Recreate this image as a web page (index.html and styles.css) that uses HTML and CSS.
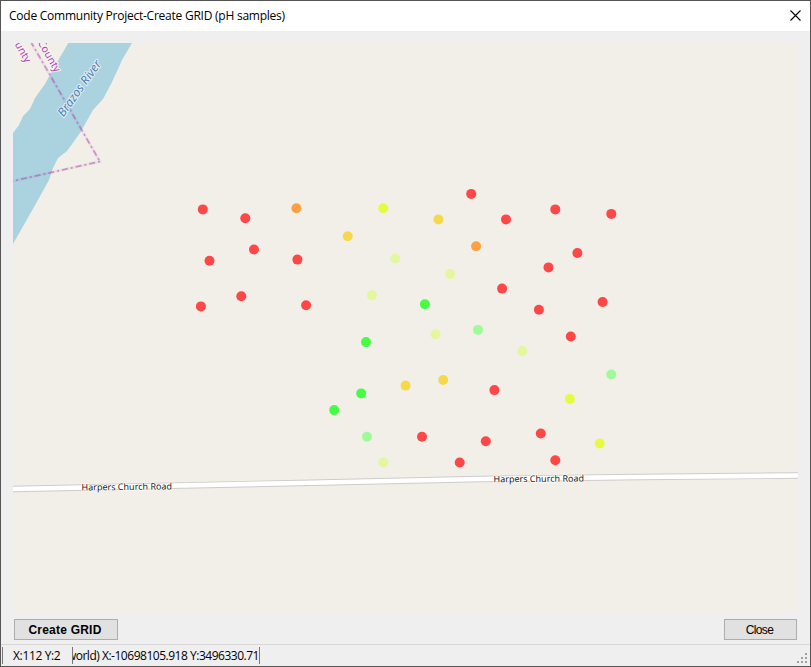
FILE: index.html
```
<!DOCTYPE html>
<html lang="en">
<head>
<meta charset="utf-8">
<title>Code Community Project</title>
<link rel="stylesheet" href="styles.css">
</head>
<body>
<div class="window">
  <header class="titlebar">
    <span class="title">Code Community Project-Create GRID (pH samples)</span>
    <svg class="close-icon" width="11" height="11" viewBox="0 0 11 11"><path d="M.5 .5l10 10M10.500 .5l-10 10"/></svg>
  </header>
  <main class="content">
    <svg class="map" width="785" height="569" viewBox="13 43 785 569">
      <path class="river" d="M68.300 43L55.500 65L45 84L35 98L30 109L23 116L19 125L13 133V244L34 207L49 180L53 168L58 158L67 151L80 133L93 110L103 99L111 84L119 67L122 60L132 43Z"/>
      <path class="border-band" d="M31.500 43L100 161.500L13 181"/>
      <path class="border-line" d="M99 160L31.500 43"/>
      <path class="border-line" d="M100 161.500L13 181"/>
      <path class="road-edge" d="M13 489L300 483L480 479L640 477L798 475.500"/>
      <path class="road" d="M13 489L300 483L480 479L640 477L798 475.500"/>
      <g class="road-label">
        <text x="81.500" y="490.500" textLength="90.500" lengthAdjust="spacingAndGlyphs" transform="rotate(-.7 82 490)">Harpers Church Road</text>
        <text x="493.500" y="482.300" textLength="90.500" lengthAdjust="spacingAndGlyphs" transform="rotate(-.5 494 482)">Harpers Church Road</text>
      </g>
      <text class="river-label" transform="translate(63.500 117.500) rotate(-54.500)" textLength="66" lengthAdjust="spacingAndGlyphs">Brazos River</text>
      <g class="county-label">
        <text transform="translate(55 73) rotate(60)" text-anchor="end">County</text>
        <text transform="translate(25.500 63.500) rotate(60)" text-anchor="end">County</text>
      </g>
      <g class="red">
        <circle cx="202.800" cy="209.400" r="5"/><circle cx="245.300" cy="218.300" r="5"/><circle cx="254" cy="249.500" r="5"/>
        <circle cx="209.500" cy="260.700" r="5"/><circle cx="297.400" cy="259.600" r="5"/><circle cx="241.300" cy="296.300" r="5"/>
        <circle cx="200.900" cy="306.400" r="5"/><circle cx="306.100" cy="305.300" r="5"/><circle cx="471.200" cy="193.900" r="5"/>
        <circle cx="506" cy="219.400" r="5"/><circle cx="555.300" cy="209.400" r="5"/><circle cx="611.300" cy="213.900" r="5"/>
        <circle cx="577.400" cy="253" r="5"/><circle cx="548.500" cy="267.400" r="5"/><circle cx="502.100" cy="288.600" r="5"/>
        <circle cx="538.900" cy="309.800" r="5"/><circle cx="602.600" cy="302" r="5"/><circle cx="570.800" cy="336.500" r="5"/>
        <circle cx="494.400" cy="390.100" r="5"/><circle cx="422" cy="436.800" r="5"/><circle cx="485.800" cy="441.200" r="5"/>
        <circle cx="540.800" cy="433.500" r="5"/><circle cx="459.700" cy="462.500" r="5"/><circle cx="555.300" cy="460.300" r="5"/>
      </g>
      <g class="orange"><circle cx="296.400" cy="208.300" r="5"/><circle cx="476.100" cy="246.200" r="5"/></g>
      <g class="gold">
        <circle cx="347.700" cy="236.200" r="5"/><circle cx="438.400" cy="219.500" r="5"/><circle cx="405.600" cy="385.600" r="5"/><circle cx="443.200" cy="380" r="5"/>
      </g>
      <g class="yellow"><circle cx="383.300" cy="208.300" r="5"/><circle cx="569.800" cy="398.900" r="5"/><circle cx="599.700" cy="443.500" r="5"/></g>
      <g class="pale">
        <circle cx="395.200" cy="258.500" r="5"/><circle cx="371.900" cy="295.200" r="5"/><circle cx="450.100" cy="274.100" r="5"/>
        <circle cx="435.500" cy="334.300" r="5"/><circle cx="522.400" cy="351.100" r="5"/><circle cx="383.400" cy="462.400" r="5"/>
      </g>
      <g class="mint"><circle cx="478" cy="329.900" r="5"/><circle cx="611.300" cy="374.500" r="5"/><circle cx="367" cy="436.800" r="5"/></g>
      <g class="green">
        <circle cx="424.900" cy="304.200" r="5"/><circle cx="366" cy="342.100" r="5"/><circle cx="361.200" cy="393.400" r="5"/><circle cx="334.200" cy="410.100" r="5"/>
      </g>
    </svg>
    <div class="actions">
      <button class="btn btn-create"><span>Create GRID</span></button>
      <button class="btn btn-close"><span>Close</span></button>
    </div>
  </main>
  <footer class="statusbar">
    <div class="pane pane-pixel"><span>X:112 Y:2</span></div>
    <div class="pane pane-world"><span>(world) X:-10698105.918 Y:3496330.71</span></div>
    <svg class="grip" width="11" height="11" viewBox="0 0 11 11"><path d="M8 0h2v2h-2zM4 4h2v2h-2zM8 4h2v2h-2zM0 8h2v2h-2zM4 8h2v2h-2zM8 8h2v2h-2z"/></svg>
  </footer>
</div>
</body>
</html>
```
FILE: styles.css
```
* { box-sizing: border-box; }
body { margin: 0; }
.window {
  width: 811px;
  height: 667px;
  display: flex;
  flex-direction: column;
  border: 1px solid #555;
  background: #efefef;
  color: #000;
  font: 12px/16px "Open Sans", sans-serif;
  overflow: hidden;
}
.titlebar {
  height: 30px;
  flex: none;
  display: flex;
  align-items: center;
  justify-content: space-between;
  padding: 0 9px 1px 8px;
  background: #fff;
}
.title { white-space: nowrap; letter-spacing: -.24px; }
.close-icon { fill: none; stroke: #000; stroke-width: 1.1; }
.content { flex: none; height: 613px; padding: 12px 12px 0; }
.map { display: block; background: #f2efe8; }
.actions { display: flex; justify-content: space-between; padding: 7px 1px 0; }
.btn {
  height: 21px;
  padding: 0;
  border: 1px solid #adadad;
  background: #e1e1e1;
  color: #000;
}
.btn-create { width: 104px; padding-right: 2px; font: bold 12px/21px "Liberation Sans", sans-serif; letter-spacing: .22px; }
.btn-close { width: 73px; padding-right: 2px; font: 12px/21px "Liberation Sans", sans-serif; letter-spacing: -.6px; }
.btn span { display: block; height: 19px; }
.statusbar {
  flex: none;
  height: 22px;
  display: flex;
  position: relative;
  border-top: 1px solid #d7d7d7;
  padding: 2px 0 0 1px;
}
.pane { height: 17px; line-height: 18px; white-space: nowrap; overflow: hidden; border-left: 1px solid #777; }
.pane-pixel { width: 70px; padding-left: 10px; letter-spacing: -.35px; }
.pane-world { width: 188px; border-right: 1px solid #777; display: flex; justify-content: flex-end; letter-spacing: -.48px; }
.grip { position: absolute; right: 2px; bottom: 2px; fill: #a0a0a0; }
.river { fill: #aad3df; }
.border-band { fill: none; stroke: #ac46ac; stroke-width: 3; opacity: .08; }
.border-line { fill: none; stroke: #ac46ac; stroke-width: 1.8; stroke-dasharray: 2 3 6 3; opacity: .5; }
.road-edge { fill: none; stroke: #ccc; stroke-width: 6.500; }
.road { fill: none; stroke: #fff; stroke-width: 4.700; }
.map text { font-family: "Noto Sans", sans-serif; paint-order: stroke; stroke-linejoin: round; }
.road-label { font-size: 9px; fill: #222; stroke: #fff; stroke-width: 1.500; }
.river-label { font-size: 12px; font-style: italic; fill: #4d80b3; stroke: #e0eff4; stroke-width: 2; }
.county-label { font-size: 10.500px; fill: #ac46ac; stroke: #f8f4f2; stroke-width: 2; }
.red { fill: #ff4747; }
.orange { fill: #fca044; }
.gold { fill: #f6d84b; }
.yellow { fill: #e6fb3f; }
.pale { fill: #e3f79e; }
.mint { fill: #9ffa9b; }
.green { fill: #47fc44; }
```
